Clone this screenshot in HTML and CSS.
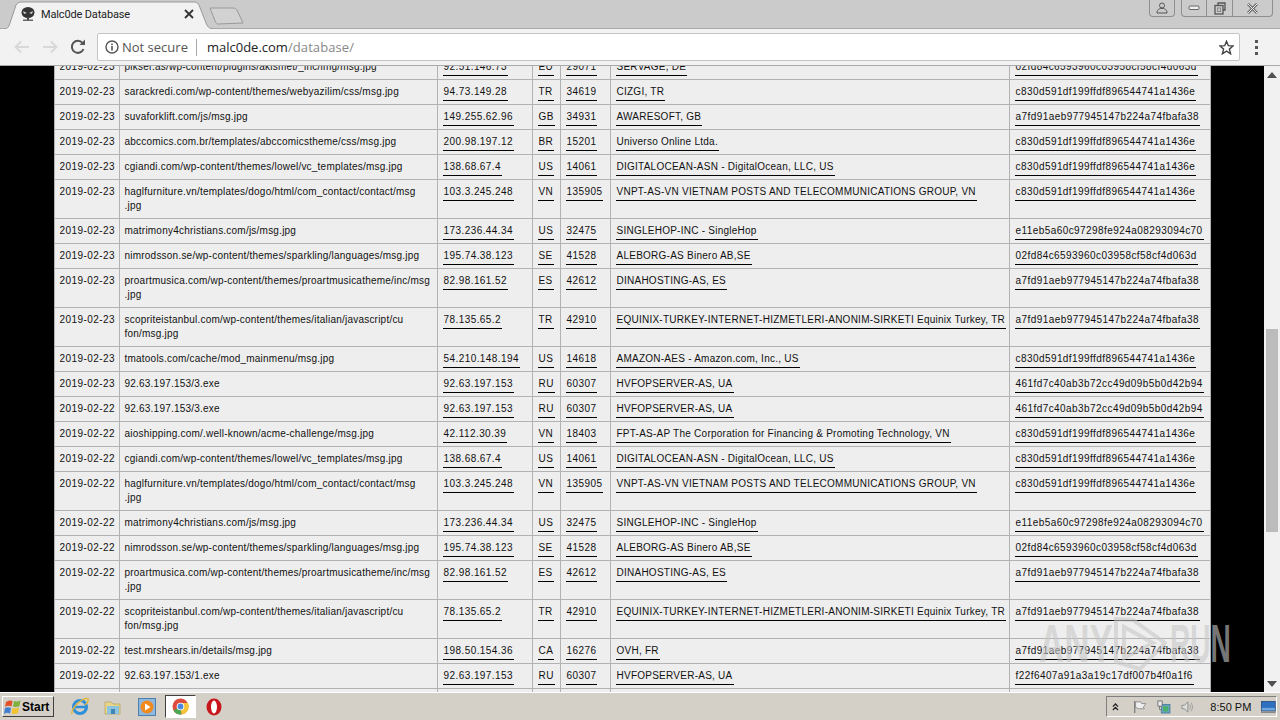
FILE: index.html
```html
<!DOCTYPE html>
<html lang="en">
<head>
  <meta charset="UTF-8">
  <title>Malc0de Database</title>
  <link rel="stylesheet" href="styles.css">
</head>
<body>
  <!-- Browser title strip -->
  <div class="tabstrip">
    <div class="tab">
      <svg class="tab-shape" width="210" height="29" viewBox="0 0 210 29"><path d="M0 29 C4 29 5 26 6 23 L12 5 C13 3 15 2 18 2 L190 2 C192 2 194 3 195 5 L202 23 C203 26 205 29 210 29" fill="#f2f2f2" stroke="#999"/></svg>
      <svg class="favicon" width="16" height="16" viewBox="0 0 16 16"><ellipse cx="8" cy="6.500" rx="6.500" ry="5.500" fill="#333"/><path d="M3 5 L7 7 L4 8 Z M13 5 L9 7 L12 8 Z" fill="#ccc"/><rect x="7" y="11" width="2" height="3" fill="#444"/><rect x="3" y="13.500" width="10" height="1.500" fill="#666"/></svg>
      <span class="tab-title">Malc0de Database</span>
      <svg class="tab-close" width="10" height="10" viewBox="0 0 10 10"><path d="M1 1 L9 9 M9 1 L1 9" stroke="#333" stroke-width="1.800"/></svg>
    </div>
    <svg class="newtab" width="35" height="18" viewBox="0 0 35 18"><path d="M1 1 L24 1 C26 1 27 2 28 3 L34 16 L9 17 C8 17 7 16 6.500 15 Z" fill="#d2d2d2" stroke="#999"/></svg>
    <div class="window-btns">
      <div class="win-btn user-btn"><svg width="12" height="12" viewBox="0 0 12 12"><circle cx="6" cy="3.500" r="2.500" fill="none" stroke="#555"/><path d="M1 11 C1 7.500 3 7 4.500 6.500 L7.500 6.500 C9 7 11 7.500 11 11 Z" fill="none" stroke="#555"/></svg></div>
      <div class="win-group">
        <div class="win-btn min-btn"><svg width="12" height="6" viewBox="0 0 12 6"><rect x="1" y="1" width="10" height="3.500" rx="1" fill="#eee" stroke="#666"/></svg></div>
        <div class="win-btn max-btn"><svg width="12" height="13" viewBox="0 0 12 13"><path d="M4 3 V1 H11 V8 H9" fill="none" stroke="#555" stroke-width="1.300"/><rect x="1" y="3.500" width="8" height="8.500" fill="none" stroke="#555" stroke-width="1.300"/><rect x="3.500" y="6" width="3" height="3.500" fill="none" stroke="#888"/></svg></div>
        <div class="win-btn close-btn"><svg width="13" height="11" viewBox="0 0 13 11"><path d="M2 1 L11 10 M11 1 L2 10" stroke="#666" stroke-width="2.600"/><path d="M2 1 L11 10 M11 1 L2 10" stroke="#eee" stroke-width="1"/></svg></div>
      </div>
    </div>
  </div>

  <!-- Browser toolbar -->
  <div class="toolbar">
    <svg class="nav-icon" width="16" height="14" viewBox="0 0 16 14"><path d="M15 7 H2 M7 1.500 L1.500 7 L7 12.500" fill="none" stroke="#d8d8d8" stroke-width="2"/></svg>
    <svg class="nav-icon" width="16" height="14" viewBox="0 0 16 14"><path d="M1 7 H14 M9 1.500 L14.500 7 L9 12.500" fill="none" stroke="#d8d8d8" stroke-width="2"/></svg>
    <svg class="nav-icon" width="16" height="16" viewBox="0 0 16 16"><path d="M13.500 10 A6 6 0 1 1 12.500 4" fill="none" stroke="#555" stroke-width="2"/><path d="M9.500 6 H15 V0.500 Z" fill="#555"/></svg>
    <div class="omnibox">
      <svg class="info-icon" width="14" height="14" viewBox="0 0 14 14"><circle cx="7" cy="7" r="6" fill="none" stroke="#555" stroke-width="1.400"/><rect x="6.200" y="6" width="1.600" height="4.500" fill="#555"/><rect x="6.200" y="3.500" width="1.600" height="1.600" fill="#555"/></svg>
      <span class="not-secure">Not secure</span>
      <span class="omni-sep"></span>
      <span class="url-host">malc0de.com</span><span class="url-path">/database/</span>
      <svg class="star" width="15" height="15" viewBox="0 0 15 15"><path d="M7.500 1.200 L9.300 5.700 L14 6 L10.400 9.100 L11.600 13.800 L7.500 11.200 L3.400 13.800 L4.600 9.100 L1 6 L5.700 5.700 Z" fill="none" stroke="#444" stroke-width="1.400"/></svg>
    </div>
    <div class="menu-dots"><i></i><i></i><i></i></div>
  </div>

  <!-- Page content -->
  <div class="viewport">
    <div class="page">
      <table class="db-table">
        <colgroup>
          <col class="c-date"><col class="c-url"><col class="c-ip"><col class="c-cc"><col class="c-asn"><col class="c-name"><col class="c-hash">
        </colgroup>
        <tr><td>2019-02-23</td><td class="u">pikser.as/wp-content/plugins/akismet/_inc/img/msg.jpg</td><td><a>92.51.146.73</a></td><td><a>EU</a></td><td><a>29071</a></td><td class="n"><a>SERVAGE, DE</a></td><td><a>02fd84c6593960c03958cf58cf4d063d</a></td></tr>
        <tr><td>2019-02-23</td><td class="u">sarackredi.com/wp-content/themes/webyazilim/css/msg.jpg</td><td><a>94.73.149.28</a></td><td><a>TR</a></td><td><a>34619</a></td><td class="n"><a>CIZGI, TR</a></td><td><a>c830d591df199ffdf896544741a1436e</a></td></tr>
        <tr><td>2019-02-23</td><td class="u">suvaforklift.com/js/msg.jpg</td><td><a>149.255.62.96</a></td><td><a>GB</a></td><td><a>34931</a></td><td class="n"><a>AWARESOFT, GB</a></td><td><a>a7fd91aeb977945147b224a74fbafa38</a></td></tr>
        <tr><td>2019-02-23</td><td class="u">abccomics.com.br/templates/abccomicstheme/css/msg.jpg</td><td><a>200.98.197.12</a></td><td><a>BR</a></td><td><a>15201</a></td><td class="n"><a>Universo Online Ltda.</a></td><td><a>c830d591df199ffdf896544741a1436e</a></td></tr>
        <tr><td>2019-02-23</td><td class="u">cgiandi.com/wp-content/themes/lowel/vc_templates/msg.jpg</td><td><a>138.68.67.4</a></td><td><a>US</a></td><td><a>14061</a></td><td class="n"><a>DIGITALOCEAN-ASN - DigitalOcean, LLC, US</a></td><td><a>c830d591df199ffdf896544741a1436e</a></td></tr>
        <tr><td>2019-02-23</td><td class="u">haglfurniture.vn/templates/dogo/html/com_contact/contact/msg<br>.jpg</td><td><a>103.3.245.248</a></td><td><a>VN</a></td><td><a>135905</a></td><td class="n"><a>VNPT-AS-VN VIETNAM POSTS AND TELECOMMUNICATIONS GROUP, VN</a></td><td><a>c830d591df199ffdf896544741a1436e</a></td></tr>
        <tr><td>2019-02-23</td><td class="u">matrimony4christians.com/js/msg.jpg</td><td><a>173.236.44.34</a></td><td><a>US</a></td><td><a>32475</a></td><td class="n"><a>SINGLEHOP-INC - SingleHop</a></td><td><a>e11eb5a60c97298fe924a08293094c70</a></td></tr>
        <tr><td>2019-02-23</td><td class="u">nimrodsson.se/wp-content/themes/sparkling/languages/msg.jpg</td><td><a>195.74.38.123</a></td><td><a>SE</a></td><td><a>41528</a></td><td class="n"><a>ALEBORG-AS Binero AB,SE</a></td><td><a>02fd84c6593960c03958cf58cf4d063d</a></td></tr>
        <tr><td>2019-02-23</td><td class="u">proartmusica.com/wp-content/themes/proartmusicatheme/inc/msg<br>.jpg</td><td><a>82.98.161.52</a></td><td><a>ES</a></td><td><a>42612</a></td><td class="n"><a>DINAHOSTING-AS, ES</a></td><td><a>a7fd91aeb977945147b224a74fbafa38</a></td></tr>
        <tr><td>2019-02-23</td><td class="u">scopriteistanbul.com/wp-content/themes/italian/javascript/cu<br>fon/msg.jpg</td><td><a>78.135.65.2</a></td><td><a>TR</a></td><td><a>42910</a></td><td class="n"><a>EQUINIX-TURKEY-INTERNET-HIZMETLERI-ANONIM-SIRKETI Equinix Turkey, TR</a></td><td><a>a7fd91aeb977945147b224a74fbafa38</a></td></tr>
        <tr><td>2019-02-23</td><td class="u">tmatools.com/cache/mod_mainmenu/msg.jpg</td><td><a>54.210.148.194</a></td><td><a>US</a></td><td><a>14618</a></td><td class="n"><a>AMAZON-AES - Amazon.com, Inc., US</a></td><td><a>c830d591df199ffdf896544741a1436e</a></td></tr>
        <tr><td>2019-02-23</td><td class="u">92.63.197.153/3.exe</td><td><a>92.63.197.153</a></td><td><a>RU</a></td><td><a>60307</a></td><td class="n"><a>HVFOPSERVER-AS, UA</a></td><td><a>461fd7c40ab3b72cc49d09b5b0d42b94</a></td></tr>
        <tr><td>2019-02-22</td><td class="u">92.63.197.153/3.exe</td><td><a>92.63.197.153</a></td><td><a>RU</a></td><td><a>60307</a></td><td class="n"><a>HVFOPSERVER-AS, UA</a></td><td><a>461fd7c40ab3b72cc49d09b5b0d42b94</a></td></tr>
        <tr><td>2019-02-22</td><td class="u">aioshipping.com/.well-known/acme-challenge/msg.jpg</td><td><a>42.112.30.39</a></td><td><a>VN</a></td><td><a>18403</a></td><td class="n"><a>FPT-AS-AP The Corporation for Financing &amp; Promoting Technology, VN</a></td><td><a>c830d591df199ffdf896544741a1436e</a></td></tr>
        <tr><td>2019-02-22</td><td class="u">cgiandi.com/wp-content/themes/lowel/vc_templates/msg.jpg</td><td><a>138.68.67.4</a></td><td><a>US</a></td><td><a>14061</a></td><td class="n"><a>DIGITALOCEAN-ASN - DigitalOcean, LLC, US</a></td><td><a>c830d591df199ffdf896544741a1436e</a></td></tr>
        <tr><td>2019-02-22</td><td class="u">haglfurniture.vn/templates/dogo/html/com_contact/contact/msg<br>.jpg</td><td><a>103.3.245.248</a></td><td><a>VN</a></td><td><a>135905</a></td><td class="n"><a>VNPT-AS-VN VIETNAM POSTS AND TELECOMMUNICATIONS GROUP, VN</a></td><td><a>c830d591df199ffdf896544741a1436e</a></td></tr>
        <tr><td>2019-02-22</td><td class="u">matrimony4christians.com/js/msg.jpg</td><td><a>173.236.44.34</a></td><td><a>US</a></td><td><a>32475</a></td><td class="n"><a>SINGLEHOP-INC - SingleHop</a></td><td><a>e11eb5a60c97298fe924a08293094c70</a></td></tr>
        <tr><td>2019-02-22</td><td class="u">nimrodsson.se/wp-content/themes/sparkling/languages/msg.jpg</td><td><a>195.74.38.123</a></td><td><a>SE</a></td><td><a>41528</a></td><td class="n"><a>ALEBORG-AS Binero AB,SE</a></td><td><a>02fd84c6593960c03958cf58cf4d063d</a></td></tr>
        <tr><td>2019-02-22</td><td class="u">proartmusica.com/wp-content/themes/proartmusicatheme/inc/msg<br>.jpg</td><td><a>82.98.161.52</a></td><td><a>ES</a></td><td><a>42612</a></td><td class="n"><a>DINAHOSTING-AS, ES</a></td><td><a>a7fd91aeb977945147b224a74fbafa38</a></td></tr>
        <tr><td>2019-02-22</td><td class="u">scopriteistanbul.com/wp-content/themes/italian/javascript/cu<br>fon/msg.jpg</td><td><a>78.135.65.2</a></td><td><a>TR</a></td><td><a>42910</a></td><td class="n"><a>EQUINIX-TURKEY-INTERNET-HIZMETLERI-ANONIM-SIRKETI Equinix Turkey, TR</a></td><td><a>a7fd91aeb977945147b224a74fbafa38</a></td></tr>
        <tr><td>2019-02-22</td><td class="u">test.mrshears.in/details/msg.jpg</td><td><a>198.50.154.36</a></td><td><a>CA</a></td><td><a>16276</a></td><td class="n"><a>OVH, FR</a></td><td><a>a7fd91aeb977945147b224a74fbafa38</a></td></tr>
        <tr><td>2019-02-22</td><td class="u">92.63.197.153/1.exe</td><td><a>92.63.197.153</a></td><td><a>RU</a></td><td><a>60307</a></td><td class="n"><a>HVFOPSERVER-AS, UA</a></td><td><a>f22f6407a91a3a19c17df007b4f0a1f6</a></td></tr>
        <tr class="spare"><td></td><td></td><td></td><td></td><td></td><td></td><td></td></tr>
      </table>
    </div>
    <!-- Scrollbar -->
    <div class="scrollbar">
      <div class="scroll-arrow"><svg width="10" height="6" viewBox="0 0 10 6"><path d="M5 0 L10 6 H0 Z" fill="#505050"/></svg></div>
      <div class="scroll-track"><div class="scroll-thumb"></div></div>
      <div class="scroll-arrow"><svg width="10" height="6" viewBox="0 0 10 6"><path d="M0 0 H10 L5 6 Z" fill="#505050"/></svg></div>
    </div>
    <!-- Watermark over the page -->
    <div class="watermark">
      <span class="wm-text wm-any">ANY</span>
      <svg width="54" height="56" viewBox="0 0 54 56"><path d="M3 3 V46 L27 53 L52 27 L20 4 Z M11 11 L40 27 L11 42 Z" fill="none" stroke="currentColor" stroke-width="4"/></svg>
      <span class="wm-text wm-run">RUN</span>
    </div>
  </div>

  <!-- Windows taskbar -->
  <div class="taskbar">
    <button class="start-btn">
      <svg width="18" height="16" viewBox="0 0 18 16"><path d="M2 3 Q5 0.500 8.500 2 L7.500 7.500 Q4 6 1 8 Z" fill="#e2502a"/><path d="M10 2 Q13 3 16.500 1.500 L15.500 7 Q12 8.500 9 7.500 Z" fill="#7fb13c"/><path d="M1 9 Q4 7.500 7 9 L6 14.500 Q3 13 0 15 Z" fill="#3f7fd0"/><path d="M8.500 9 Q12 10 15 8.500 L14 14 Q11 15.500 7.500 14.500 Z" fill="#f2c230"/></svg>
      <span>Start</span>
    </button>
    <div class="quick-icons">
      <div class="task-icon"><svg width="20" height="20" viewBox="0 0 20 20"><circle cx="10" cy="10" r="6.500" fill="none" stroke="#2f8fd8" stroke-width="3"/><path d="M5 10 H16" stroke="#2f8fd8" stroke-width="2.500"/><path d="M2 17 Q1 13 8 6 Q15 0 18 2 Q19 5 15 8" fill="none" stroke="#e0b83a" stroke-width="1.500"/></svg></div>
      <div class="task-icon"><svg width="18" height="18" viewBox="0 0 18 18"><path d="M1 4 H7 L9 6 H16 V16 H1 Z" fill="#e8d58a" stroke="#b9a35c" stroke-width=".8"/><rect x="3" y="8" width="12" height="8" fill="#8cc4e0"/><rect x="7" y="11" width="4" height="5" fill="#3f86b5"/></svg></div>
      <div class="task-icon"><svg width="18" height="18" viewBox="0 0 18 18"><rect x=".5" y=".5" width="17" height="17" fill="#8fb8dc" stroke="#4a7fb0"/><circle cx="9" cy="9" r="6.500" fill="#f08a1c"/><path d="M7 5.500 L12.500 9 L7 12.500 Z" fill="#fff"/></svg></div>
      <div class="task-icon active-task"><svg width="17" height="17" viewBox="0 0 17 17"><circle cx="8.500" cy="8.500" r="8" fill="#dd4b3e"/><path d="M8.500 8.500 L1.500 12.500 A8 8 0 0 0 9.500 16.500 Z" fill="#4aa853"/><path d="M8.500 8.500 L9.500 16.500 A8 8 0 0 0 16 5 L8.500 5 Z" fill="#f5c63a"/><circle cx="8.500" cy="8.500" r="3.800" fill="#fff"/><circle cx="8.500" cy="8.500" r="2.900" fill="#4a89dc"/></svg></div>
      <div class="task-icon"><svg width="16" height="18" viewBox="0 0 16 18"><ellipse cx="8" cy="9" rx="7.500" ry="8.500" fill="#c8161d"/><ellipse cx="8" cy="9" rx="3" ry="6.500" fill="#fff"/></svg></div>
    </div>
    <div class="tray">
      <svg class="tray-chevron" width="8" height="10" viewBox="0 0 8 10"><path d="M1 4.500 L4 1.500 L7 4.500 M1 8.500 L4 5.500 L7 8.500" fill="none" stroke="#222" stroke-width="1.400"/></svg>
      <svg width="16" height="16" viewBox="0 0 16 16"><path d="M2 1 V15" stroke="#777" stroke-width="1.400"/><path d="M3 2 H9 L10 4 H15 L12 8 L13 10 H6 L5 9 H3 Z" fill="#eee" stroke="#888"/></svg>
      <svg width="16" height="16" viewBox="0 0 16 16"><rect x="5" y="5" width="10" height="10" fill="#6aa3c8" stroke="#4b7a99"/><path d="M1 1 H6 V7 H1 Z M3 7 V11 H5" fill="#eee" stroke="#666"/><circle cx="10" cy="10" r="3.500" fill="#4caf6c"/></svg>
      <svg width="16" height="16" viewBox="0 0 16 16"><path d="M1 6 H4 L8 2 V14 L4 10 H1 Z" fill="#ddd" stroke="#888"/><path d="M10 5 Q12 8 10 11 M12 3 Q15 8 12 13" fill="none" stroke="#999"/></svg>
      <span class="clock">8:50 PM</span>
      <svg width="17" height="14" viewBox="0 0 17 14"><rect x=".5" y=".5" width="16" height="11" fill="#2f6fc0" stroke="#2a4f80"/><rect x="1" y="8" width="15" height="3" fill="#6fa8dc"/><rect x="0" y="12" width="17" height="2" fill="#8a8a8a"/></svg>
    </div>
  </div>
</body>
</html>
```
FILE: styles.css
```css
html, body {
  margin: 0;
  height: 100%;
}

body {
  display: flex;
  flex-direction: column;
  width: 1280px;
  height: 720px;
  overflow: hidden;
  background-color: #000;
  font-family: "Liberation Sans", Arial, sans-serif;
}

/* Title strip */
.tabstrip {
  display: flex;
  height: 28px;
  flex-shrink: 0;
  background-color: #cbcbcb;
}

.tab {
  position: relative;
  display: flex;
  align-items: center;
  width: 210px;
  height: 28px;
  margin-left: 4px;
  padding: 0 20px 0 16px;
  box-sizing: border-box;
}

.tab-shape {
  position: absolute;
  top: 0;
  left: 0;
}

.favicon, .tab-title, .tab-close {
  position: relative;
}

.tab-title {
  flex: 1;
  margin-left: 5px;
  font-family: Roboto, sans-serif;
  font-size: 11px;
  letter-spacing: -.15px;
  color: #222;
}

.newtab {
  margin: 7px 0 0 -5px;
}

.window-btns {
  display: flex;
  gap: 6px;
  margin-left: auto;
  margin-right: 7px;
}

.win-group {
  display: flex;
  border: 1px solid #8f8f8f;
  border-top: none;
  border-radius: 0 0 4px 4px;
  height: 16px;
}

.win-btn {
  display: flex;
  align-items: center;
  justify-content: center;
}

.user-btn {
  width: 24px;
  height: 16px;
  border: 1px solid #8f8f8f;
  border-top: none;
  border-radius: 0 0 4px 4px;
}

.min-btn {
  width: 24px;
  border-right: 1px solid #8f8f8f;
}

.max-btn {
  width: 25px;
  border-right: 1px solid #8f8f8f;
}

.close-btn {
  width: 39px;
}

/* Toolbar */
.toolbar {
  display: flex;
  align-items: center;
  height: 38px;
  flex-shrink: 0;
  padding-left: 14px;
  box-sizing: border-box;
  background-color: #f2f2f2;
  border-top: 1px solid #a9a9a9;
  border-bottom: 1px solid #a9a9a9;
}

.nav-icon {
  margin-right: 12px;
}

.omnibox {
  display: flex;
  align-items: center;
  width: 1143px;
  height: 28px;
  margin-left: -1px;
  padding-left: 7px;
  box-sizing: border-box;
  background-color: #fff;
  border: 1px solid #c4c4c4;
  border-radius: 2px;
}

.info-icon {
  margin-right: 3px;
}

.not-secure {
  font-family: "Open Sans", sans-serif;
  font-size: 13px;
  color: #555;
}

.omni-sep {
  width: 1px;
  height: 17px;
  margin: 0 10px 0 8px;
  background-color: #aaa;
}

.url-host, .url-path {
  font-family: "Open Sans", sans-serif;
  font-size: 13px;
  color: #222;
}

.url-path {
  color: #888;
  letter-spacing: .1px;
}

.star {
  margin-left: auto;
  margin-right: 5px;
}

.menu-dots {
  display: flex;
  flex-direction: column;
  gap: 3px;
  margin-left: 15px;
}

.menu-dots i {
  width: 3px;
  height: 3px;
  background-color: #555;
}

/* Page area */
.viewport {
  position: relative;
  display: flex;
  flex: 1;
  min-height: 0;
}

.page {
  flex: 1;
  overflow: hidden;
  background-color: #000;
}

.db-table {
  width: 1156px;
  margin: -12px auto 0;
  table-layout: fixed;
  border-collapse: collapse;
  background-color: #eee;
  font-size: 10px;
  letter-spacing: .43px;
  color: #111;
}

.c-date { width: 65px; }
.c-url { width: 318px; }
.c-ip { width: 95px; }
.c-cc { width: 28px; }
.c-asn { width: 50px; }
.c-name { width: 399px; }
.c-hash { width: 201px; }

.db-table td {
  padding: 5px 5px 5px;
  vertical-align: top;
  line-height: 14px;
  white-space: nowrap;
  overflow: hidden;
  border: 1px solid #b2b2b2;
}

.db-table td.u {
  letter-spacing: .22px;
}

.db-table td.n {
  letter-spacing: .25px;
}

.db-table a {
  padding: 0 1px 3px;
  border-bottom: 1px solid #000;
}

.spare td {
  height: 14px;
}

/* Scrollbar */
.scrollbar {
  display: flex;
  flex-direction: column;
  width: 16px;
  flex-shrink: 0;
  background-color: #f1f1f1;
}

.scroll-arrow {
  display: flex;
  align-items: center;
  justify-content: center;
  height: 17px;
}

.scroll-track {
  flex: 1;
  padding: 246px 2px 0;
  min-height: 0;
}

.scroll-thumb {
  height: 203px;
  background-color: #bcbcbc;
}

/* Watermark */
.watermark {
  position: absolute;
  top: 547px;
  left: 1039px;
  display: flex;
  align-items: center;
  font-size: 53px;
  font-weight: bold;
  color: rgba(200, 200, 200, .6);
}

.wm-text {
  transform-origin: left;
}

.wm-any {
  width: 74px;
  transform: scaleX(.66);
}

.wm-run {
  width: 61px;
  margin-left: 3px;
  transform: scaleX(.53);
}

/* Taskbar */
.taskbar {
  display: flex;
  align-items: center;
  height: 28px;
  flex-shrink: 0;
  box-sizing: border-box;
  background-color: #d4d0c8;
  border-top: 1px solid #fff;
}

.start-btn {
  display: flex;
  align-items: center;
  gap: 0;
  width: 52px;
  height: 21px;
  margin-left: 2px;
  padding: 0 0 0 1px;
  background-color: #d4d0c8;
  border: 1px solid;
  border-color: #fff #404040 #404040 #fff;
  font-family: "Liberation Sans", sans-serif;
  font-size: 12px;
  font-weight: bold;
  color: #000;
}

.quick-icons {
  display: flex;
  align-items: center;
  margin-left: 9px;
}

.task-icon {
  display: flex;
  align-items: center;
  justify-content: center;
  width: 33.500px;
  height: 23px;
}

.active-task {
  width: 31px;
  margin: 0 2px 0 1px;
  background-color: #fff;
  border: 1px solid;
  border-color: #404040 #fff #fff #404040;
  box-sizing: border-box;
}

.tray {
  display: flex;
  align-items: center;
  gap: 10px;
  width: 171px;
  height: 21px;
  margin-left: auto;
  margin-right: 3px;
  padding: 0 0 0 5px;
  box-sizing: border-box;
  border: 1px solid;
  border-color: #808080 #fff #fff #808080;
}

.tray-chevron {
  margin-right: 4px;
}

.clock {
  margin-left: 6px;
  font-size: 11px;
  white-space: nowrap;
  color: #111;
}
```
